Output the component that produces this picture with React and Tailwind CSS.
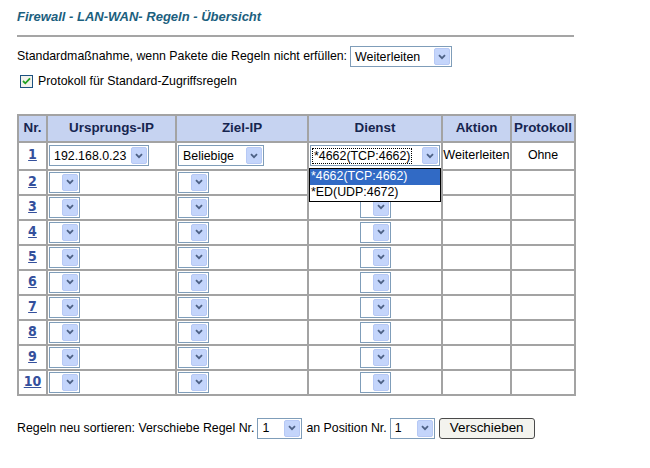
import React from 'react';

const Arrow = ({ h = 17 }) => (
  <span className="flex w-[16px] shrink-0 items-center justify-center rounded-[2px] bg-[#c4d5fb] border border-[#b7c9f5]" style={{ height: h }}>
    <svg width="8" height="6" viewBox="0 0 8 6">
      <path d="M1 1.2 L4 4.2 L7 1.2" fill="none" stroke="#4d6185" strokeWidth="1.8" />
    </svg>
  </span>
);

const Sel = ({ text = '', w, focus = false }) => (
  <span
    className="inline-flex h-[21px] items-center justify-between border border-[#7f9db9] bg-white pl-[2px] pr-[1px] align-middle"
    style={{ width: w }}
  >
    <span className={`text-[12.4px] leading-[14px] text-black whitespace-nowrap ${focus ? 'outline-1 outline-dotted outline-black px-[1px]' : 'pl-[2px]'}`}>{text}</span>
    <Arrow h={17} />
  </span>
);

const Num = ({ n }) => (
  <span
    className="underline font-bold text-[#34509c] text-[14px] leading-[14px]"
    style={{ fontFamily: '"Liberation Sans Narrow", "DejaVu Sans Condensed", sans-serif' }}
  >
    {n}
  </span>
);

const rows = [2, 3, 4, 5, 6, 7, 8, 9, 10];

export default function App() {
  const td = 'border-2 border-[#a3a3a3] p-0';
  return (
    <div className="w-[650px] h-[468px] bg-white pl-[17px] pt-[8px] text-black text-[12.35px]" style={{ fontFamily: '"Liberation Sans", Arial, sans-serif' }}>
      <h1 className="text-[13px] leading-[16px] font-bold italic text-[#1b607e] pt-[1px]">Firewall - LAN-WAN- Regeln - Übersicht</h1>
      <div className="mt-[10px] h-[2px] w-[557px] bg-[#a5a5a5]" />

      <div className="mt-[9px] flex items-center gap-[3px]">
        <span>Standardmaßnahme, wenn Pakete die Regeln nicht erfüllen:</span>
        <Sel text="Weiterleiten" w={102} />
      </div>
      <div className="mt-[5px] flex items-center pl-[3px]">
        <span className="flex h-[13px] w-[13px] items-center justify-center border border-[#1c5180] bg-[#f2f2ec]">
          <svg width="9" height="8" viewBox="0 0 9 8">
            <path d="M1 4 L3.3 6.3 L8 1.3" fill="none" stroke="#21a121" strokeWidth="1.8" />
          </svg>
        </span>
        <span className="ml-[5px]">Protokoll für Standard-Zugriffsregeln</span>
      </div>

      <table className="mt-[23px] w-[557px] table-fixed border-collapse">
        <colgroup>
          <col className="w-[29px]" />
          <col className="w-[129px]" />
          <col className="w-[132px]" />
          <col className="w-[134px]" />
          <col className="w-[69px]" />
          <col className="w-[64px]" />
        </colgroup>
        <thead>
          <tr className="h-[27px] bg-[#c6d3f1] text-[#16254f] font-bold text-[13.4px]">
            <th className={td}>Nr.</th>
            <th className={td}>Ursprungs-IP</th>
            <th className={td}>Ziel-IP</th>
            <th className={td}>Dienst</th>
            <th className={td}>Aktion</th>
            <th className={td}>Protokoll</th>
          </tr>
        </thead>
        <tbody>
          <tr className="h-[28px]">
            <td className={`${td} text-center`}><Num n={1} /></td>
            <td className={`${td} pl-[1px]`}><Sel text="192.168.0.23" w={100} /></td>
            <td className={`${td} pl-[1px]`}><Sel text="Beliebige" w={86} /></td>
            <td className={`${td} relative pl-[1px]`}>
              <Sel text="*4662(TCP:4662)" w={130} focus />
              <div className="absolute left-[0px] top-[25px] z-10 w-[132px] border border-black bg-white text-[12.4px] leading-[15px]">
                <div className="bg-[#316ac5] text-white pl-[1px] h-[16px]">*4662(TCP:4662)</div>
                <div className="pl-[1px] h-[16px]">*ED(UDP:4672)</div>
              </div>
            </td>
            <td className={`${td} text-center text-[12.6px]`}>Weiterleiten</td>
            <td className={`${td} text-center`}>Ohne</td>
          </tr>
          {rows.map((n) => (
            <tr key={n} className="h-[25px]">
              <td className={`${td} text-center`}><Num n={n} /></td>
              <td className={`${td} pl-[1px]`}><Sel w={31} /></td>
              <td className={`${td} pl-[1px]`}><Sel w={31} /></td>
              <td className={`${td} text-center`}><Sel w={31} /></td>
              <td className={td}></td>
              <td className={td}></td>
            </tr>
          ))}
        </tbody>
      </table>

      <div className="mt-[22px] flex items-center">
        <span>Regeln neu sortieren: Verschiebe Regel Nr.</span>
        <span className="ml-[3px]"><Sel text="1" w={45} /></span>
        <span className="ml-[4px]">an Position Nr.</span>
        <span className="ml-[3px]"><Sel text="1" w={45} /></span>
        <button className="ml-[4px] h-[21px] w-[96px] rounded-[3px] border border-[#4a4a4a] bg-[#f3f3ee] text-[13.4px] leading-[14px]">Verschieben</button>
      </div>
    </div>
  );
}
